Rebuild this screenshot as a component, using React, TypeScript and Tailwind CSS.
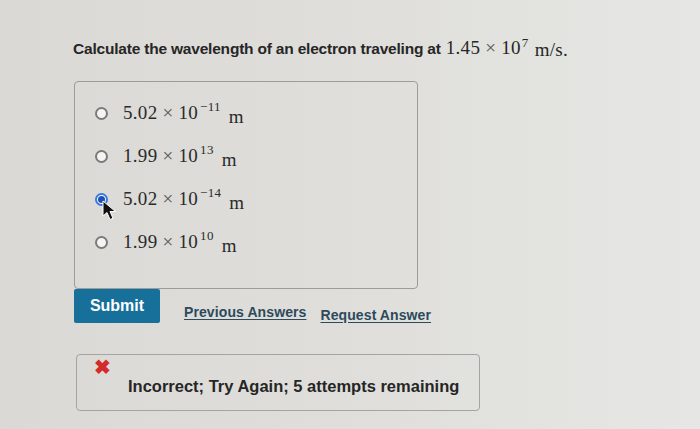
import React from "react";

const serif = { fontFamily: '"Liberation Serif", "DejaVu Serif", serif' };

function Sci({ m, e }: { m: string; e: string }) {
  return (
    <span style={serif} className="text-[19px] text-[#2a2a2a] whitespace-nowrap tracking-[0.3px]">
      {m}
      <span className="text-[#555] mx-[5px]">×</span>10
      <sup className="text-[13px] relative -top-[8px] ml-[2px]">{e}</sup>
      <span className="ml-[8px] relative top-[4px]">m</span>
    </span>
  );
}

function Radio({ checked }: { checked?: boolean }) {
  return checked ? (
    <span className="relative w-[13px] h-[13px] rounded-full border-[2px] border-[#3b78dc] bg-white flex items-center justify-center shrink-0">
      <span className="w-[7px] h-[7px] rounded-full bg-[#1d4fb8]" />
      <svg className="absolute left-[5px] top-[5px]" width="16" height="22" viewBox="0 0 16 22">
        <path d="M1 1 L1 16 L5 12.5 L8 19.5 L11 18.3 L8 11.5 L13.5 11.5 Z" fill="#111" stroke="#fff" strokeWidth="1" />
      </svg>
    </span>
  ) : (
    <span className="w-[13px] h-[13px] rounded-full border-[2px] border-[#7a7a7a] bg-[#f4f4f2] shrink-0" />
  );
}

export default function App() {
  const opts = [
    { m: "5.02", e: "−11" },
    { m: "1.99", e: "13" },
    { m: "5.02", e: "−14", checked: true },
    { m: "1.99", e: "10" },
  ];
  return (
    <div
      className="w-[700px] h-[429px] overflow-hidden bg-gradient-to-r from-[#dad9d6] via-[#dfdedb] to-[#e6e7e4] pl-[73px] pt-[38px]"
      style={{ fontFamily: '"Liberation Sans", Arial, sans-serif' }}
    >
      <div className="text-[15.5px] text-[#262626] font-bold tracking-[-0.2px] leading-[20px] flex items-baseline whitespace-nowrap">
        <span>Calculate the wavelength of an electron traveling at</span>
        <span style={serif} className="ml-[5px] text-[19px] font-normal tracking-[0.3px]">
          1.45<span className="text-[#555] mx-[5px]">×</span>10
          <sup className="text-[13px] relative -top-[7px] ml-[1px]">7</sup>
          <span className="ml-[6px] relative top-[2px]">m/s.</span>
        </span>
      </div>

      <div className="mt-[22px] ml-[1px] w-[344px] h-[208px] border border-[#9c9c9a] rounded-[4px] pt-[19px] pl-[20px] flex flex-col gap-[18px]">
        {opts.map((o, i) => (
          <div key={i} className="flex items-center gap-[15px] h-[25px]">
            <Radio checked={o.checked} />
            <Sci m={o.m} e={o.e} />
          </div>
        ))}
      </div>

      <div className="flex items-end">
        <div className="ml-[1px] w-[86px] h-[34px] bg-[#17709a] rounded-[2px] flex items-center justify-center text-white font-bold text-[16px]">
          Submit
        </div>
        <span className="ml-[24px] mb-[0px] text-[14px] font-bold text-[#2d4a5c] underline underline-offset-[2px] tracking-[0.1px]">
          Previous Answers
        </span>
        <span className="ml-[14px] -mb-[3px] text-[14px] font-bold text-[#2d4a5c] underline underline-offset-[2px] tracking-[0.1px]">
          Request Answer
        </span>
      </div>

      <div className="mt-[31px] ml-[3px] w-[404px] h-[57px] border border-[#a4a4a2] rounded-[4px] flex items-start pl-[17px] pt-[2px]">
        <span className="text-[#d42a2a] font-bold text-[20px] leading-[20px]">✖</span>
        <span className="ml-[17px] mt-[17px] text-[16.5px] font-bold text-[#262626]">
          Incorrect; Try Again; 5 attempts remaining
        </span>
      </div>
    </div>
  );
}
